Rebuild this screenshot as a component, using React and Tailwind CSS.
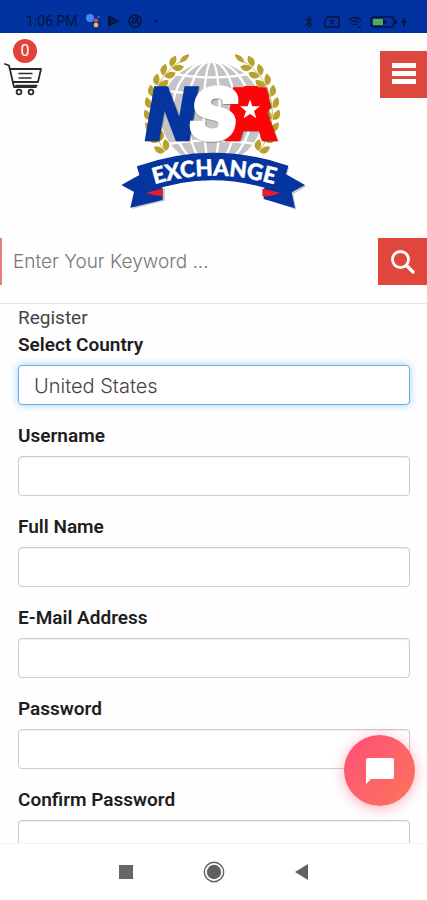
import React, { useState } from 'react';
import { MdBluetooth, MdBolt } from 'react-icons/md';

const fields = [
  { id: 'username', label: 'Username', type: 'text' },
  { id: 'fullname', label: 'Full Name', type: 'text' },
  { id: 'email', label: 'E-Mail Address', type: 'email' },
  { id: 'password', label: 'Password', type: 'password' },
  { id: 'confirm', label: 'Confirm Password', type: 'password' },
];

const StatusBar = () => (
  <div className="h-[33px] shrink-0 bg-[#0033a0] text-[#07133d] flex items-end justify-between pl-[26px] pr-4 pb-1">
    <div className="flex items-center gap-2">
      <span className="text-[14px] leading-4">1:06 PM</span>
      <svg width="14" height="14" viewBox="0 0 14 14">
        <circle cx="4" cy="4" r="4" fill="#4387f5" />
        <circle cx="10" cy="6.5" r="2" fill="#e5443a" />
        <circle cx="10" cy="11" r="2.3" fill="#f5c33b" />
        <circle cx="12.6" cy="3" r="1" fill="#3aa757" />
      </svg>
      <svg width="12" height="12" viewBox="0 0 12 12" fill="currentColor">
        <path d="M0 0l12 6-12 6z" />
        <path d="M3 3l3 3-3 3z M7 4l2 2-2 2z" fill="#0033a0" opacity=".5" />
      </svg>
      <svg width="14" height="14" viewBox="0 0 14 14" fill="none" stroke="currentColor" strokeWidth="1.5">
        <circle cx="7" cy="7" r="6" />
        <path d="M4 9.500c0-5 2-6 3.500-6s3 2 1.500 5M6 10l2-4 3 4" />
      </svg>
      <svg className="ml-1" width="4" height="4" viewBox="0 0 4 4" fill="currentColor">
        <circle cx="2" cy="2" r="1.5" />
      </svg>
    </div>
    <div className="flex items-center gap-2">
      <MdBluetooth size={14} />
      <svg width="16" height="12" viewBox="0 0 16 12" fill="none" stroke="currentColor" strokeWidth="1.3">
        <path d="M4 1h11v10H1V4zM6 4l4 4m0-4L6 8" />
      </svg>
      <svg width="14" height="12" viewBox="0 0 14 12" fill="none" stroke="currentColor" strokeWidth="1.6">
        <path d="M1 4c3-3 9-3 12 0M3 6.500c2-2 6-2 8 0M5 9c1-1 3-1 4 0M10 11h3" />
      </svg>
      <div className="flex items-center">
        <svg width="27" height="12" viewBox="0 0 27 12">
          <rect x="1" y="1" width="23" height="10" rx="3" fill="none" stroke="currentColor" strokeWidth="1.6" />
          <rect x="3" y="3" width="10" height="6" fill="#4fae4e" />
          <path d="M13 3l4 3-4 3zM25 4h2v4h-2z" fill="currentColor" />
        </svg>
        <MdBolt size={14} />
      </div>
    </div>
  </div>
);

const CartIcon = () => (
  <svg width="38" height="34" viewBox="0 0 38 34" fill="none" stroke="#2b2b2b" strokeWidth="1.8" strokeLinecap="round" strokeLinejoin="round">
    <path d="M1 1l4 1.500L10 24h22M6 6h31l-3 13H9" />
    <path d="M15 10.500h13M15 15h12M12 22.500h21" strokeWidth="1.400" />
    <circle cx="15" cy="29" r="2.400" />
    <circle cx="27" cy="29" r="2.400" />
  </svg>
);

// one branch, leaves go in pairs along the stem
const stemAngles = [141, 152, 163, 174, 185, 196, 207, 218, 229];

const Laurel = () => (
  <g fill="#b9a12c">
    <path d="M168 332A181 181 0 0 1 216 63" fill="none" stroke="#c9b95f" strokeWidth="3" />
    {stemAngles.map((a) => (
      <g key={a} transform={`rotate(${a} 309 218) translate(491 218)`}>
        <path d="M-2 -2C-22 -4 -29 12 -22 27C-8 24 -1 14 -2 -2z" />
        <path d="M2 -2C21 -2 26 13 18 30C4 25 -1 12 2 -2z" />
      </g>
    ))}
    <path d="M212 68C214 52 226 44 241 43C238 58 228 67 212 68z" />
  </g>
);

const Logo = () => (
  <svg className="w-[210px] h-[180px]" viewBox="0 0 630 540" role="img" aria-label="NSA Exchange">
    <circle cx="308" cy="220" r="154" fill="#c4c4c6" />
    <g fill="none" stroke="#fff" strokeWidth="7">
      <path d="M190 100C260 116 356 116 426 100M150 148C240 166 376 166 466 148M150 318C240 296 376 296 466 318" />
      <ellipse cx="308" cy="220" rx="24" ry="156" />
      <ellipse cx="308" cy="220" rx="72" ry="156" />
      <ellipse cx="308" cy="220" rx="118" ry="156" />
    </g>
    <Laurel />
    <g transform="translate(618 0) scale(-1 1)">
      <Laurel />
    </g>
    <g className="drop-shadow-[2px_2px_2px_rgba(0,0,0,0.45)]" fontWeight="900">
      <text x="110" y="300" fontFamily="Roboto, sans-serif" fontSize="222" fontStyle="italic" fill="#0635a0" stroke="#0635a0" strokeWidth="6">N</text>
      <path d="M372 142h100l14 60-50 60-76-40z" fill="#fb0509" />
      <text x="350" y="300" fontFamily="Roboto, sans-serif" fontSize="222" fill="#fb0509" stroke="#fb0509" strokeWidth="6">A</text>
      <text x="240" y="301" fontFamily="Inter, sans-serif" fontSize="218" fontStyle="italic" fill="#fff" stroke="#fff" strokeWidth="5">S</text>
    </g>
    <path d="M423 178l7 21h23l-18 14 7 22-19-13-19 13 7-22-18-14h23z" fill="#fff" />
    <g fill="#999" opacity=".5">
      <path d="M89 384L96 409 42 439 79 459 69 507 168 482V446zM540 382L534 405 592 439 553 462 562 509 470 478V446z" />
    </g>
    <path d="M84 379L91 405 37 435 75 455 64 503 161 480V446zM538 377L530 402 588 435 548 457 558 505 464 477V446z" fill="#0635a0" />
    <path d="M110 458L160 446V469L138 466zM514 458L460 446V469L486 468z" fill="#e81c2a" />
    <path d="M84 379Q308 298 538 377L514 458Q308 384 110 458z" fill="#0635a0" />
    <path id="ribbon" d="M118 439Q308 375 514 438" fill="none" />
    <text fontFamily="Lato, sans-serif" fontWeight="900" fontSize="67" fill="#fff" stroke="#fff" strokeWidth="1.500">
      <textPath href="#ribbon" startOffset="50%" textAnchor="middle">EXCHANGE</textPath>
    </text>
  </svg>
);

const Header = () => (
  <header className="flex items-start justify-between pb-[18px]">
    <a href="#cart" aria-label="Cart" className="w-[47px] pl-1 pt-1.5 flex flex-col">
      <span className="w-6 h-6 ml-[9px] rounded-full bg-[#e3423b] text-white text-[16px] leading-6 text-center">0</span>
      <CartIcon />
    </a>
    <div className="pt-[7px]">
      <Logo />
    </div>
    <button type="button" aria-label="Menu" className="w-[47px] h-[47px] mt-[18px] bg-[#dc473e] flex items-center justify-center">
      <svg width="24" height="24" viewBox="0 0 24 24" fill="#fff">
        <path d="M0 0h24v5H0zM0 8h24v5H0zM0 16h24v5H0z" />
      </svg>
    </button>
  </header>
);

const SearchBar = () => (
  <form className="flex pb-[18px] border-b border-[#e4e4e4]">
    <input
      type="text"
      aria-label="Search"
      placeholder="Enter Your Keyword ..."
      className="flex-1 min-w-0 h-[47px] border-l-2 border-[#e5807c] pl-[11px] font-[Inter] font-light text-[19px] placeholder:text-[#777] outline-none"
    />
    <button type="button" aria-label="Submit search" className="w-[49px] h-[47px] bg-[#e1463c] text-white flex items-center justify-center">
      <svg width="24" height="24" viewBox="0 0 24 24" fill="none" stroke="currentColor" strokeWidth="2.8" strokeLinecap="round">
        <circle cx="9.500" cy="9.500" r="8" />
        <path d="M15.500 15.500l6.500 6.500" strokeWidth="3.400" />
      </svg>
    </button>
  </form>
);

const labelClass = 'block mb-[7px] text-[19px] leading-[27px] font-semibold text-[#1d1d1f]';

const RegisterForm = () => {
  const [country, setCountry] = useState('us');

  return (
    <form className="pl-[18px] pr-[17px]">
      <h1 className="text-[19px] leading-[27px] text-[#444]">Register</h1>
      <div className="mb-[17px]">
        <label htmlFor="country" className={labelClass}>Select Country</label>
        <select
          id="country"
          value={country}
          onChange={(e) => setCountry(e.target.value)}
          className="block w-full h-10 px-[15px] pt-0.5 appearance-none rounded border border-[#66afe9] shadow-[0_0_9px_rgba(102,175,233,0.6)] bg-white font-[Inter] font-light text-[20px] text-[#444] outline-none"
        >
          <option value="us">United States</option>
        </select>
      </div>
      {fields.map((field) => (
        <div key={field.id} className="mb-[17px]">
          <label htmlFor={field.id} className={labelClass}>{field.label}</label>
          <input
            id={field.id}
            type={field.type}
            className="block w-full h-10 px-[15px] rounded border border-[#ccc] shadow-[inset_0_1px_1px_rgba(0,0,0,0.07)] bg-white text-[19px] outline-none"
          />
        </div>
      ))}
    </form>
  );
};

const NavBar = () => (
  <nav className="h-[57px] shrink-0 border-t border-[#f3f3f3] bg-white flex items-center justify-center gap-16">
    <button type="button" aria-label="Recent apps" className="w-6 h-6 flex items-center justify-center">
      <svg width="14" height="14" viewBox="0 0 14 14"><path d="M0 0h14v14H0z" fill="#666" /></svg>
    </button>
    <button type="button" aria-label="Home" className="w-6 h-6 flex items-center justify-center">
      <svg width="22" height="22" viewBox="0 0 22 22">
        <circle cx="11" cy="11" r="9.7" fill="none" stroke="#606060" strokeWidth="1.4" />
        <circle cx="11" cy="11" r="7.2" fill="#606060" />
      </svg>
    </button>
    <button type="button" aria-label="Back" className="w-6 h-6 flex items-center justify-center">
      <svg width="14" height="16" viewBox="0 0 14 16"><path d="M13 0v16L0 8z" fill="#606060" /></svg>
    </button>
  </nav>
);

const App = () => (
  <div className="relative h-screen flex flex-col overflow-hidden bg-[#fefefe] font-[Roboto]">
    <StatusBar />
    <main className="flex-1 min-h-0 overflow-hidden">
      <Header />
      <SearchBar />
      <RegisterForm />
    </main>
    <NavBar />

    {/* Chat bubble */}
    <button
      type="button"
      aria-label="Open chat"
      className="absolute right-3 bottom-[94px] w-[71px] h-[71px] rounded-full bg-linear-to-br from-[#ff4c78] to-[#fb7558] shadow-[0_2px_14px_rgba(255,76,110,0.45)] flex items-center justify-center"
    >
      <svg width="28" height="26" viewBox="0 0 28 26">
        <path d="M2 0h24q2 0 2 2v17q0 2-2 2H5L0 26V2q0-2 2-2z" fill="#fff" />
      </svg>
    </button>
  </div>
);

export default App;
